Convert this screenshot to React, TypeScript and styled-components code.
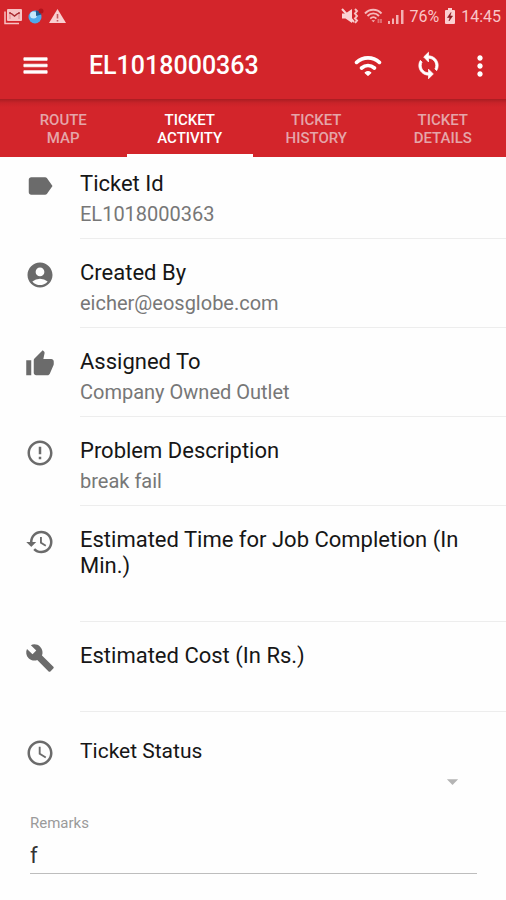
import React from "react";
import styled, { createGlobalStyle, css } from "styled-components";
import {
  MdAccessTime,
  MdAccountCircle,
  MdArrowDropDown,
  MdBuild,
  MdErrorOutline,
  MdHistory,
  MdLabel,
  MdMenu,
  MdMoreVert,
  MdSync,
  MdThumbUp,
} from "react-icons/md";

const GlobalStyle = createGlobalStyle`
  *, *::before, *::after { box-sizing: border-box; }
  body {
    margin: 0;
    background: #fefefe;
    color: #161616;
    font-family: Roboto, "Liberation Sans", sans-serif;
  }
  button, input, select { font: inherit; color: inherit; }
`;

const Screen = styled.div`
  display: flex;
  flex-direction: column;
  min-height: 100vh;
`;

const StatusBar = styled.div`
  display: flex;
  align-items: center;
  justify-content: space-between;
  height: 32px;
  padding: 0 5px 0 4px;
  background: #d3252b;
  color: #f9c6c8;
  font-size: 16px;
`;

const StatusGroup = styled.div`
  display: flex;
  align-items: center;
  gap: 5px;
`;

const Toolbar = styled.header`
  display: flex;
  align-items: center;
  height: 67px;
  padding: 0 14px 0 15px;
  background: #d3252b;
  color: #fff;
`;

const Title = styled.h1`
  flex: 1;
  margin: 0 0 0 34px;
  font-size: 25px;
  line-height: 32px;
  font-weight: 500;
`;

const Actions = styled.div`
  display: flex;
  align-items: center;
  gap: 20px;
`;

const IconButton = styled.button<{ $narrow?: boolean }>`
  display: flex;
  align-items: center;
  justify-content: center;
  width: ${(p) => (p.$narrow ? 24 : 40)}px;
  height: 40px;
  padding: 0;
  border: 0;
  background: none;
  cursor: pointer;

  svg { flex: none; }
`;

const heavyStroke = css`
  stroke-width: 0.6;
  path[fill="none"] { stroke: none; }
`;

const HeavyMenu = styled(MdMenu)`
  ${heavyStroke}
`;

const HeavySync = styled(MdSync)`
  ${heavyStroke}
`;

const Tabs = styled.nav`
  display: grid;
  grid-template-columns: repeat(4, 1fr);
  height: 58px;
  background: linear-gradient(#a91d22, #c92329 4px, #d3252b 8px);
`;

const Tab = styled.button<{ $active?: boolean }>`
  padding: 4px 24px 0;
  border: 0;
  border-bottom: 3px solid transparent;
  background: none;
  color: #e5a5a9;
  font-size: 15px;
  line-height: 18px;
  font-weight: 500;
  text-transform: uppercase;
  cursor: pointer;
  ${(p) =>
    p.$active &&
    css`
      color: #fff;
      border-bottom-color: #fff;
    `}
`;

const List = styled.main`
  display: flex;
  flex-direction: column;
`;

const Row = styled.section<{ $first?: boolean; $last?: boolean }>`
  display: grid;
  grid-template-columns: 80px 1fr;
  padding-top: ${(p) => (p.$first ? 14 : p.$last ? 26 : 21)}px;
`;

const RowIcon = styled.div`
  display: flex;
  align-items: flex-start;
  justify-content: center;
  color: #6b6b6b;
`;

const RowBody = styled.div<{ $last?: boolean }>`
  display: flex;
  flex-direction: column;
  gap: 4px;
  padding: 0 ${(p) => (p.$last ? 40 : 0)}px 11px 0;
  border-bottom: ${(p) => (p.$last ? 0 : 1)}px solid #ededed;
`;

const Label = styled.h2<{ $small?: boolean }>`
  margin: 0;
  font-size: ${(p) => (p.$small ? 21 : 22)}px;
  line-height: 26px;
  font-weight: 400;
`;

const Value = styled.p`
  margin: 0;
  color: #777;
  font-size: 20px;
  line-height: 26px;

  &:empty { height: 27px; }
`;

const SelectBox = styled.div`
  display: grid;
  align-items: center;
  justify-items: end;
  height: 24px;
  color: #b4b4b4;

  > * { grid-area: 1 / 1; }
  svg { pointer-events: none; }
`;

const Select = styled.select`
  width: 100%;
  height: 24px;
  border: 0;
  background: none;
  appearance: none;
`;

const Remarks = styled.label`
  display: flex;
  flex-direction: column;
  gap: 4px;
  margin: 10px 29px 24px 30px;
  color: #9a9a9a;
  font-size: 15px;
  line-height: 20px;
`;

const RemarksInput = styled.input`
  width: 100%;
  height: 37px;
  padding: 0;
  border: 0;
  border-bottom: 1px solid #bdbdbd;
  border-radius: 0;
  background: none;
  color: #333;
  font-size: 22px;
  outline: 0;
`;

const MailIcon = () => (
  <svg width="19" height="17" viewBox="0 0 19 17" fill="none" aria-hidden="true">
    <path d="M1 3.500v12h14" stroke="#f7c3c4" strokeWidth="1.500" />
    <rect x="3" y="1" width="15" height="12" rx="1" fill="#f7c3c4" />
    <path d="M6 4.500l4.500 3.500L15 4.500M6 4v2M15 4v2" stroke="#a92a30" strokeWidth="1.500" />
    <path d="M6 6v5M15 6v5" stroke="#dd8a8d" strokeWidth="1" />
  </svg>
);

const BallIcon = () => (
  <svg width="16" height="16" viewBox="0 0 16 16" aria-hidden="true">
    <circle cx="7" cy="9" r="6.500" fill="#4da9ec" />
    <circle cx="5.500" cy="7" r="3.500" fill="#c6e7fb" />
    <path d="M8 8V2.500a6 6 0 0 1 5.500 4z" fill="#1e5c94" />
    <circle cx="13" cy="3" r="2.500" fill="#b3141c" />
  </svg>
);

const WarningIcon = () => (
  <svg width="17" height="16" viewBox="0 0 17 16" aria-hidden="true">
    <path d="M8.500 1 17 15H0z" fill="#f9cfd0" />
    <path d="M8.500 6v4.500M8.500 12v1.500" stroke="#c25a5e" strokeWidth="1.600" />
  </svg>
);

const MuteIcon = () => (
  <svg width="18" height="16" viewBox="0 0 18 16" fill="none" aria-hidden="true">
    <path d="M1 5.500h3.500L11 1v14l-6.500-4.500H1z" fill="#fbd3d4" />
    <path d="m1 1 12 13" stroke="#fbd3d4" strokeWidth="2" />
    <path d="m14 1 2 2-2 2.500 2 2.500-2 2.500 2 2-2 2.500" stroke="#f7c3c4" strokeWidth="2" />
  </svg>
);

const SmallWifiIcon = () => (
  <svg width="19" height="16" viewBox="0 0 19 16" fill="none" stroke="#f5b9bb" strokeWidth="1.900" aria-hidden="true">
    <path d="M1 5.500c4.500-5 12-5 16.500 0M3.500 8c3.300-3.500 8.300-3.500 11.500 0M6.200 10.600c2-2 4.200-2 6.200 0" />
    <path d="m7.500 12.200 1.800 2 1.800-2z" fill="#f5b9bb" stroke="none" />
    <path d="M14.500 11v4M17 11v4" stroke="#df6f73" />
  </svg>
);

const SignalIcon = () => (
  <svg width="16" height="15" viewBox="0 0 16 15" fill="#f3b0b2" aria-hidden="true">
    <path d="M0 12h2v3H0zM4 9.500h2V15H4zM8 6h2.500v9H8zM13 1h2.500v14H13z" />
  </svg>
);

const BatteryIcon = () => (
  <svg width="12" height="16" viewBox="0 0 12 16" aria-hidden="true">
    <path d="M4 0h4v2h2a1 1 0 0 1 1 1v12a1 1 0 0 1-1 1H2a1 1 0 0 1-1-1V3a1 1 0 0 1 1-1h2z" fill="#fbd0d1" />
    <path d="M7 4.500 3.500 9.500H6L5 13l3.500-5H6z" fill="#8c1a20" stroke="#8c1a20" strokeWidth="0.600" />
  </svg>
);

const WifiIcon = () => (
  <svg width="28" height="22" viewBox="0 0 28 22" fill="none" stroke="#fff" strokeWidth="3.700" strokeLinecap="round" aria-hidden="true">
    <path d="M2.600 7.400c6.500-6 16.300-6 22.800 0M7.600 13c3.800-3.300 9-3.300 12.800 0" />
    <path d="M11.200 17.700c1.700-1.200 3.900-1.200 5.600 0L14 20.300z" fill="#fff" strokeWidth="1.200" strokeLinejoin="round" />
  </svg>
);

const tabs = ["Route Map", "Ticket Activity", "Ticket History", "Ticket Details"];

const rows = [
  { icon: MdLabel, label: "Ticket Id", value: "EL1018000363" },
  { icon: MdAccountCircle, label: "Created By", value: "eicher@eosglobe.com" },
  { icon: MdThumbUp, label: "Assigned To", value: "Company Owned Outlet" },
  { icon: MdErrorOutline, label: "Problem Description", value: "break fail" },
  { icon: MdHistory, label: "Estimated Time for Job Completion (In Min.)", value: "" },
  { icon: MdBuild, label: "Estimated Cost (In Rs.)", value: "" },
];

export default function App() {
  return (
    <Screen>
      <GlobalStyle />
      <StatusBar>
        <StatusGroup>
          <MailIcon />
          <BallIcon />
          <WarningIcon />
        </StatusGroup>
        <StatusGroup>
          <MuteIcon />
          <SmallWifiIcon />
          <SignalIcon />
          <span>76%</span>
          <BatteryIcon />
          <span>14:45</span>
        </StatusGroup>
      </StatusBar>
      <Toolbar>
        <IconButton aria-label="Menu"><HeavyMenu size={31} /></IconButton>
        <Title>EL1018000363</Title>
        <Actions>
          <IconButton aria-label="Connection"><WifiIcon /></IconButton>
          <IconButton aria-label="Sync"><HeavySync size={29} /></IconButton>
          <IconButton $narrow aria-label="More"><MdMoreVert size={32} /></IconButton>
        </Actions>
      </Toolbar>
      <Tabs>
        {tabs.map((name) => (
          <Tab key={name} $active={name === "Ticket Activity"}>{name}</Tab>
        ))}
      </Tabs>
      <List>
        {rows.map(({ icon: Icon, label, value }, i) => (
          <Row key={label} $first={i === 0}>
            <RowIcon><Icon size={30} /></RowIcon>
            <RowBody>
              <Label>{label}</Label>
              <Value>{value}</Value>
            </RowBody>
          </Row>
        ))}
        <Row $last>
          <RowIcon><MdAccessTime size={30} /></RowIcon>
          <RowBody $last>
            <Label as="label" $small htmlFor="status">Ticket Status</Label>
            <SelectBox>
              <Select id="status" defaultValue="">
                <option value="" />
              </Select>
              <MdArrowDropDown size={27} />
            </SelectBox>
          </RowBody>
        </Row>
        <Remarks>
          Remarks
          <RemarksInput defaultValue="f" />
        </Remarks>
      </List>
    </Screen>
  );
}
